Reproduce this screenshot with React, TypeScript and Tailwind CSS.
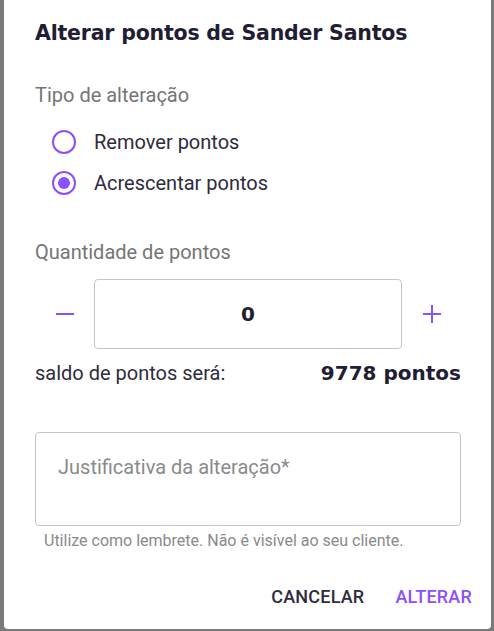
import React from "react";

const App = () => {
  return (
    <div className="w-[494px] h-[631px] bg-[#7a7a7a] pl-[4px] pr-[3px] pb-[2px] overflow-hidden">
      <div className="h-full bg-white rounded-b-[4px] flex flex-col font-['Roboto',sans-serif]">
        {/* Title */}
        <h2 className="pl-[31px] pt-[21px] text-[20.5px] leading-[24px] font-bold text-[#221d33] font-['DejaVu_Sans',sans-serif] tracking-[-0.2px]">
          Alterar pontos de Sander Santos
        </h2>

        <div className="pl-[31px] pr-[30px]">
          <p className="mt-[38px] text-[20px] leading-[24px] text-[#757575]">Tipo de alteração</p>

          {/* Radios */}
          <div className="mt-[23px] flex flex-col gap-[17px] pl-[17px]">
            <label className="flex items-center gap-[18px] h-[24px]">
              <span className="w-[24px] h-[24px] rounded-full border-[2.5px] border-[#8a4fff]" />
              <span className="text-[20px] leading-[24px] text-[#2f2b3d]">Remover pontos</span>
            </label>
            <label className="flex items-center gap-[18px] h-[24px]">
              <span className="w-[24px] h-[24px] rounded-full border-[2.5px] border-[#8a4fff] flex items-center justify-center">
                <span className="w-[12px] h-[12px] rounded-full bg-[#8a4fff]" />
              </span>
              <span className="text-[20px] leading-[24px] text-[#2f2b3d]">Acrescentar pontos</span>
            </label>
          </div>

          <p className="mt-[45px] text-[20px] leading-[24px] text-[#757575]">Quantidade de pontos</p>

          {/* Stepper */}
          <div className="mt-[15px] flex items-center">
            <button className="w-[59px] h-[70px] flex items-center justify-center">
              <span className="block w-[18px] h-[2px] bg-[#8a4fff]" />
            </button>
            <div className="w-[308px] h-[70px] border border-[#c4c4c4] rounded-[4px] flex items-center justify-center">
              <span className="text-[20px] font-bold text-[#221d33] font-['DejaVu_Sans',sans-serif]">0</span>
            </div>
            <button className="w-[59px] h-[70px] flex items-center justify-center relative">
              <span className="block w-[18px] h-[2px] bg-[#8a4fff]" />
              <span className="absolute block w-[2px] h-[18px] bg-[#8a4fff]" />
            </button>
          </div>

          {/* Balance */}
          <div className="mt-[12px] h-[24px] flex items-center justify-between">
            <span className="text-[20px] leading-[24px] text-[#2f2b3d]">saldo de pontos será:</span>
            <span className="text-[20px] leading-[24px] font-bold text-[#221d33] font-['DejaVu_Sans',sans-serif]">9778 pontos</span>
          </div>

          {/* Justification */}
          <div className="mt-[47px] h-[94px] border border-[#c4c4c4] rounded-[4px] px-[22px] pt-[22px]">
            <span className="block text-[20px] leading-[24px] text-[#8a8a8a]">Justificativa da alteração*</span>
          </div>
          <p className="mt-[5px] pl-[9px] text-[16px] leading-[20px] text-[#8a8a8a]">
            Utilize como lembrete. Não é visível ao seu cliente.
          </p>
        </div>

        {/* Actions */}
        <div className="mt-auto mb-[20px] flex justify-end items-center gap-[31px] pr-[19px]">
          <button className="text-[18px] leading-[24px] font-medium text-[#2f2b3d] tracking-[0.2px]">CANCELAR</button>
          <button className="text-[18px] leading-[24px] font-medium text-[#8a4fff] tracking-[0.2px]">ALTERAR</button>
        </div>
      </div>
    </div>
  );
};

export default App;
